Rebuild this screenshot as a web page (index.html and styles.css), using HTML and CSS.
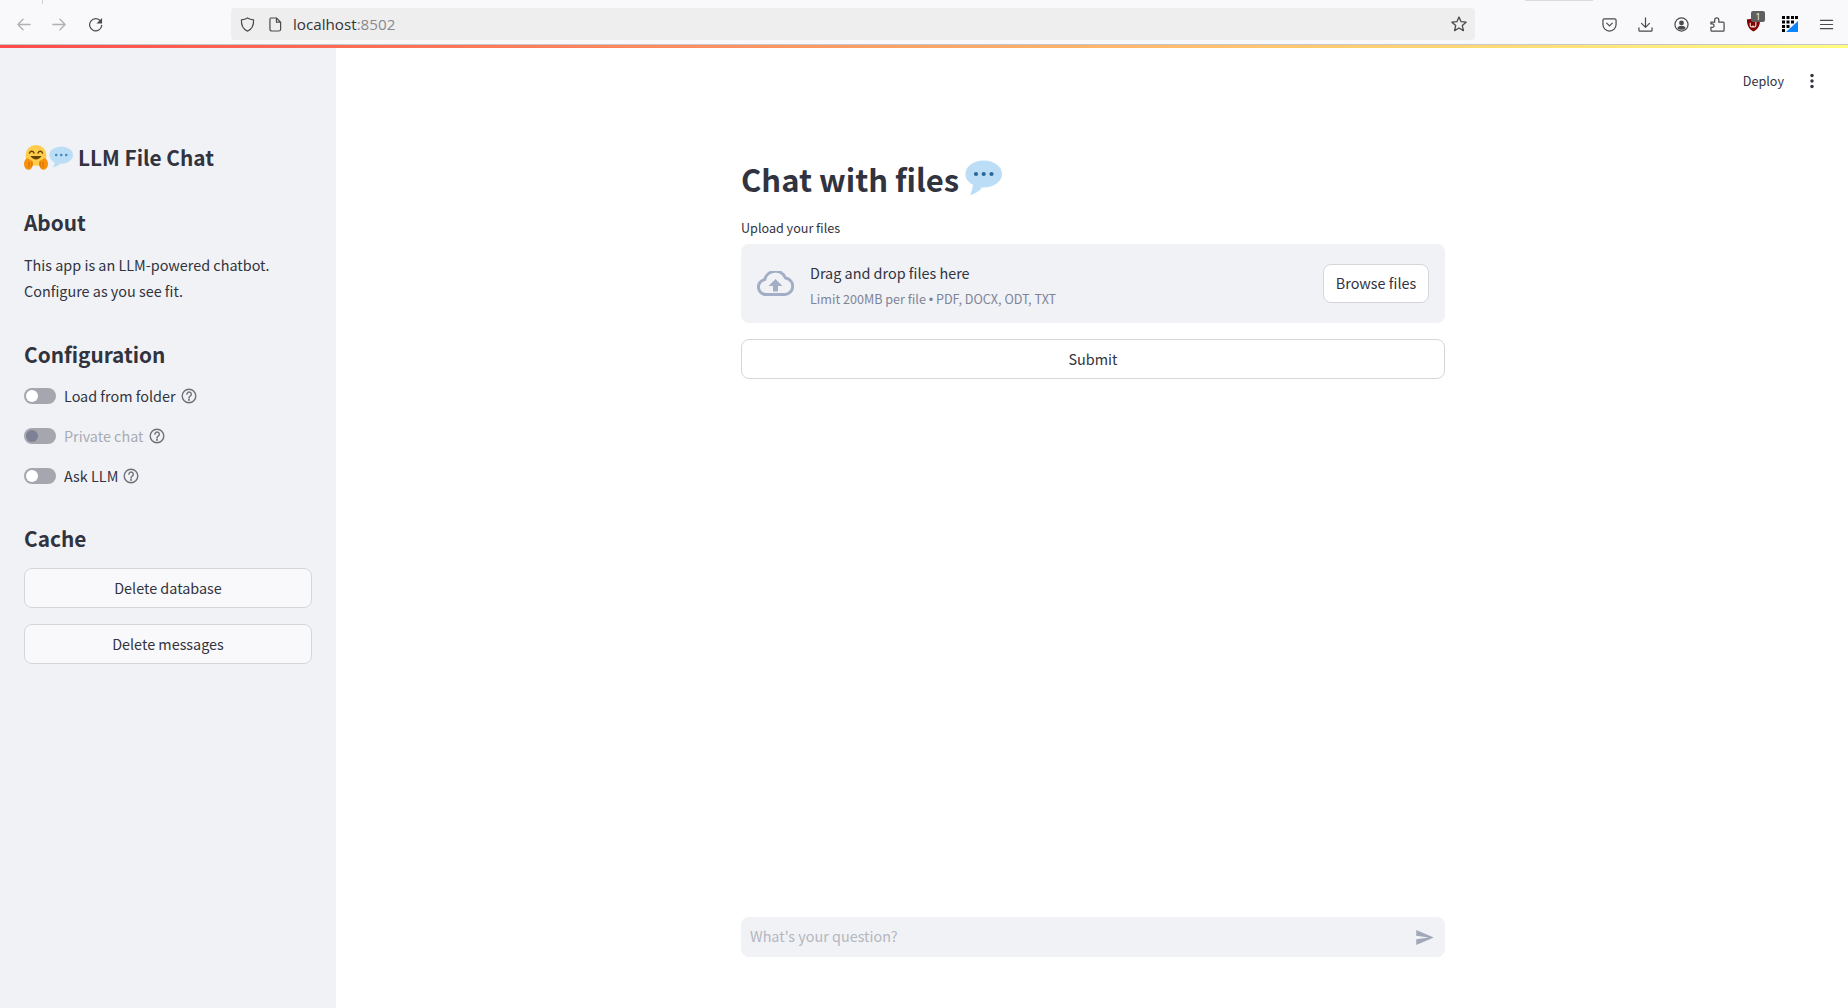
FILE: index.html
```html
<!DOCTYPE html>
<html lang="en">
<head>
<meta charset="utf-8">
<title>LLM File Chat</title>
<link rel="stylesheet" href="styles.css">
</head>
<body>
<header class="browser">
  <span class="tab-tick"></span>
  <span class="tab-shadow"></span>
  <nav class="nav-buttons">
    <svg class="ico" viewBox="0 0 16 16"><path class="dim" d="M15 8H2M7.5 2.5 2 8l5.500 5.500"/></svg>
    <svg class="ico" viewBox="0 0 16 16"><path class="dim" d="M1 8h13M8.500 2.500 14 8l-5.500 5.500"/></svg>
    <svg class="ico" viewBox="0 0 16 16"><path class="line" d="M13.500 4.500A6.500 6.500 0 1 0 14.700 9"/><path class="solid" d="M15 1v6H9z"/></svg>
  </nav>
  <div class="urlbar">
    <svg class="ico-url" viewBox="0 0 16 16"><path class="line" d="M8 1c2 1.300 4 1.800 6.500 2 .3 6-1.500 10-6.500 12C3 13 1.200 9 1.500 3 4 2.800 6 2.300 8 1z"/></svg>
    <svg class="ico-doc" viewBox="0 0 14 16"><path class="line" d="M2 1h6l4.500 4.500V13a2 2 0 0 1-2 2H3a2 2 0 0 1-2-2V2.500A1.500 1.500 0 0 1 2 1zM8 1v4.500h4.500"/></svg>
    <span class="url"><span class="host">localhost</span><span class="port">:8502</span></span>
    <svg class="ico-star" viewBox="0 0 16 16"><path class="line" d="m8 1 2.100 4.700 5 .5-3.800 3.400 1.100 5L8 12l-4.400 2.600 1.100-5L.9 6.200l5-.5z"/></svg>
  </div>
  <div class="tools">
    <svg class="ico" viewBox="0 0 16 16"><path class="line" d="M2.500 2h11A1.500 1.500 0 0 1 15 3.500V8A7 7 0 0 1 1 8V3.500A1.500 1.500 0 0 1 2.500 2z"/><path class="line" d="M5 6.500 8 9.500l3-3"/></svg>
    <svg class="ico" viewBox="0 0 16 16"><path class="line" d="M8 1v10M3.800 6.800 8 11l4.200-4.200M1 11.500V14a1 1 0 0 0 1 1h12a1 1 0 0 0 1-1v-2.500"/></svg>
    <svg class="ico" viewBox="0 0 16 16"><circle class="line" cx="8" cy="8" r="7"/><circle class="solid" cx="8" cy="6.300" r="2.600"/><path class="solid" d="M3.500 12c.6-2 2.500-2.800 4.500-2.800s3.900.8 4.500 2.800A6.500 6.500 0 0 1 8 13.700 6.500 6.500 0 0 1 3.500 12z"/></svg>
    <svg class="ico" viewBox="0 0 16 16"><path class="line" d="M2 15a1 1 0 0 1-1-1v-3h1.500a1.800 1.800 0 0 0 0-3.600H1V5.500h4V3.200a2.200 2.200 0 0 1 4.400 0V5.500H14a1 1 0 0 1 1 1V14a1 1 0 0 1-1 1z"/></svg>
    <span class="ublock">
      <svg class="ico" viewBox="0 0 16 16"><path class="shield" d="M8 1c2 1 4.500 1.500 7 1.500C15 9 13 13 8 15.500 3 13 1 9 1 2.500 3.500 2.500 6 2 8 1z"/><path class="ub-mark" d="M4.500 6v3a1.500 1.500 0 0 0 3 0 1.500 1.500 0 0 0 3 0V5"/></svg>
      <span class="badge">1</span>
    </span>
    <svg class="ico-grid" viewBox="0 0 16 16"><path class="grid-blue" d="M16 5v11H4z"/><path class="grid-black" d="M0 0h3v3H0zM4.500 0h3v3h-3zM9 0h3v3H9zM13 0h3v3h-3zM0 4.500h3v3H0zM4.500 4.500h3v3h-3zM9 4.500h3v3H9zM0 9h3v3H0zM4.500 9h3v3h-3zM0 13h3v3H0z"/></svg>
    <svg class="ico" viewBox="0 0 16 16"><path class="line" d="M1.500 3.500h13M1.500 8h13M1.500 12.500h13"/></svg>
  </div>
</header>
<div class="decoration"></div>
<div class="app">
  <aside class="sidebar">
    <h1 class="brand">
      <svg class="emoji" viewBox="0 0 24 25">
        <circle cx="12" cy="10.500" r="10.500" fill="#ffcc4d"/>
        <path d="M5.500 8c1-2.200 3.500-2.200 4.500 0M14 8c1-2.200 3.500-2.200 4.500 0" fill="none" stroke="#664500" stroke-width="1.500" stroke-linecap="round"/>
        <path d="M6.500 11c2.500 4.500 8.500 4.500 11 0z" fill="#664500"/>
        <path d="M0 19c0-2.500 1-4.500 3-6l5.500 3c1.500 3.500-.5 8.500-3.500 8.800C2 25 0 22 0 19zM24 19c0-2.500-1-4.500-3-6l-5.500 3c-1.500 3.500.5 8.500 3.500 8.800 3 .2 5-2.800 5-5.800z" fill="#f7910b"/>
        <path d="M4.500 17c1 1.500 1 3.500 0 5.500M7.500 17c.7 1.500.7 3 0 4.500M19.500 17c-1 1.500-1 3.500 0 5.500M16.500 17c-.7 1.500-.7 3 0 4.500" fill="none" stroke="#c86a00" stroke-width=".9"/>
      </svg>
      <svg class="emoji" viewBox="0 0 25 24">
        <ellipse cx="12.700" cy="9.500" rx="12.300" ry="9" fill="#bbddf5"/>
        <path d="M6 16c0 2-1 5-2 6.500 3-.5 6-2.500 8-4.500z" fill="#bbddf5"/>
        <g fill="#3b88c3"><circle cx="7.500" cy="9.500" r="1.300"/><circle cx="12.700" cy="9.500" r="1.300"/><circle cx="18" cy="9.500" r="1.300"/></g>
      </svg>
      <span class="brand-text">LLM File Chat</span>
    </h1>
    <h2 class="side-h about-h">About</h2>
    <p class="side-p">This app is an LLM-powered chatbot.</p>
    <p class="side-p">Configure as you see fit.</p>
    <h2 class="side-h config-h">Configuration</h2>
    <ul class="toggles">
      <li class="toggle"><span class="track"><span class="knob"></span></span><span class="t-label">Load from folder</span>
        <svg class="help" viewBox="0 0 16 16"><circle cx="8" cy="8" r="6.800"/><path d="M5.900 6.200a2.200 2.200 0 1 1 3.300 2c-.8.500-1.200.9-1.200 1.800"/><path d="M8 11.300v1.200"/></svg></li>
      <li class="toggle off"><span class="track"><span class="knob"></span></span><span class="t-label">Private chat</span>
        <svg class="help" viewBox="0 0 16 16"><circle cx="8" cy="8" r="6.800"/><path d="M5.900 6.200a2.200 2.200 0 1 1 3.300 2c-.8.500-1.200.9-1.200 1.800"/><path d="M8 11.300v1.200"/></svg></li>
      <li class="toggle"><span class="track"><span class="knob"></span></span><span class="t-label">Ask LLM</span>
        <svg class="help" viewBox="0 0 16 16"><circle cx="8" cy="8" r="6.800"/><path d="M5.900 6.200a2.200 2.200 0 1 1 3.300 2c-.8.500-1.200.9-1.200 1.800"/><path d="M8 11.300v1.200"/></svg></li>
    </ul>
    <h2 class="side-h cache-h">Cache</h2>
    <button class="btn side-btn">Delete database</button>
    <button class="btn side-btn">Delete messages</button>
  </aside>
  <main class="main">
    <div class="topbar">
      <span class="deploy">Deploy</span>
      <svg class="kebab" viewBox="0 0 4 16"><circle cx="2" cy="2.500" r="1.700"/><circle cx="2" cy="8" r="1.700"/><circle cx="2" cy="13.500" r="1.700"/></svg>
    </div>
    <section class="block">
      <h1 class="title">Chat with files
        <svg class="title-emoji" viewBox="0 0 37 36">
          <ellipse cx="18.700" cy="14" rx="18.300" ry="13.500" fill="#bbddf5"/>
          <path d="M8 24c0 3-1.500 8-3 11 5-1 9-4 12-7z" fill="#bbddf5"/>
          <g fill="#2a6797"><circle cx="11" cy="14" r="2.100"/><circle cx="18.700" cy="14" r="2.100"/><circle cx="26.500" cy="14" r="2.100"/></g>
        </svg>
      </h1>
      <label class="up-label">Upload your files</label>
      <div class="dropzone">
        <svg class="cloud" viewBox="0 0 37 25"><path d="M9 23.500a7.500 7.500 0 0 1-1.300-14.900A11 11 0 0 1 28.500 7a8.300 8.300 0 0 1-.5 16.500z" fill="none" stroke="#a3adc6" stroke-width="3" stroke-linejoin="round"/><path d="m18.500 8 7 7h-4.500v5.500h-5V15h-4.500z" fill="#a3adc6"/></svg>
        <div class="drop-text">
          <div class="drop-main">Drag and drop files here</div>
          <div class="drop-sub">Limit 200MB per file <span class="dot">•</span> PDF, DOCX, ODT, TXT</div>
        </div>
        <button class="btn browse">Browse files</button>
      </div>
      <button class="btn submit">Submit</button>
    </section>
    <div class="chatbar">
      <span class="placeholder">What's your question?</span>
      <svg class="send" viewBox="2 3 21 18"><path d="M2.010 21 23 12 2.010 3 2 10l15 2-15 2z"/></svg>
    </div>
  </main>
</div>
</body>
</html>
```
FILE: styles.css
```css
* { box-sizing: border-box; }
html, body { margin: 0; height: 100%; overflow: hidden; }
body {
  display: flex;
  flex-direction: column;
  background: #fff;
  color: #31333f;
  font-family: "Noto Sans CJK SC", "Noto Sans", sans-serif;
  font-size: 14.4px;
}
svg { display: block; flex: none; }
.line, .dim { fill: none; stroke: #4a4a4f; stroke-width: 1.300; stroke-linejoin: round; stroke-linecap: round; }
.dim { stroke: #b1b1b3; stroke-width: 1.500; }
.solid { fill: #4a4a4f; }

/* browser chrome */
.browser {
  position: relative;
  height: 45px;
  flex: none;
  display: flex;
  align-items: center;
  padding-top: 4px;
  background: #f9f9fb;
  border-bottom: 1px solid #c8c8cc;
}
.tab-tick { position: absolute; left: 42px; top: 0; width: 1px; height: 4px; background: #d0d0d4; }
.tab-shadow { position: absolute; left: 1525px; top: 0; width: 68px; height: 1px; background: #dcdcdf; }
.nav-buttons { display: flex; gap: 21px; margin-left: 16px; width: 215px; }
.ico { width: 15px; height: 15px; }
.urlbar {
  width: 1244px;
  height: 32px;
  display: flex;
  align-items: center;
  background: #eeeeef;
  border-radius: 4px;
  padding: 0 8px 0 9px;
}
.ico-url { width: 15px; height: 15px; }
.ico-doc { width: 13px; height: 15px; margin-left: 14px; }
.url { margin-left: 11px; font-family: "Open Sans", sans-serif; font-size: 15.2px; line-height: 20px; flex: 1; }
.host { color: #333338; }
.port { color: #8a8a8e; }
.ico-star { width: 16px; height: 16px; }
.tools { display: flex; align-items: center; gap: 21px; margin-left: 127px; }
.ublock { position: relative; display: block; }
.shield { fill: #800000; }
.ub-mark { fill: none; stroke: #f2dede; stroke-width: 1.200; }
.badge {
  position: absolute;
  left: 5px;
  top: -6px;
  width: 14px;
  height: 11px;
  border-radius: 2px;
  background: #5f5f5f;
  color: #fff;
  font: 9px/11px "Open Sans", sans-serif;
  text-align: center;
}
.ico-grid { width: 16px; height: 16px; }
.grid-blue { fill: #0a84ff; }
.grid-black { fill: #000; }
.decoration {
  height: 3px;
  flex: none;
  background: linear-gradient(90deg, #ff4b4b, #fffd80);
}

/* app */
.app { flex: 1; min-height: 0; display: flex; }
.sidebar {
  width: 336px;
  flex: none;
  background: #f0f2f6;
  padding: 93px 24px 0;
}
.brand {
  margin: 0;
  display: flex;
  align-items: center;
  height: 32px;
  font-size: 20.8px;
  line-height: 32px;
  font-weight: 600;
}
.emoji { width: 24px; height: 25px; }
.emoji + .emoji { margin-left: 1px; }
.brand-text { margin-left: 5px; }
.side-h { margin: 0; font-size: 20.8px; line-height: 32px; font-weight: 600; }
.about-h { margin-top: 33px; }
.side-p { margin: 0; font-size: 14.4px; line-height: 26px; }
.about-h + .side-p { margin-top: 14px; }
.config-h { margin-top: 34px; }
.toggles { list-style: none; margin: 14px 0 0; padding: 0; display: flex; flex-direction: column; gap: 16px; }
.toggle { display: flex; align-items: center; height: 24px; }
.track {
  width: 32px;
  height: 16px;
  border-radius: 8px;
  background: #a6a6ae;
  padding: 2px;
  flex: none;
}
.knob { display: block; width: 12px; height: 12px; border-radius: 50%; background: #fff; }
.t-label { margin-left: 8px; font-size: 14.4px; line-height: 24px; }
.help { width: 16px; height: 16px; margin-left: 5px; fill: none; stroke: #6f717b; stroke-width: 1.400; stroke-linecap: round; }
.off .knob { background: #7e8095; }
.off .t-label { color: #a9abb4; }
.cache-h { margin-top: 34px; }

.btn {
  display: block;
  font-family: inherit;
  color: #31333f;
  background: #fff;
  border: 1px solid #d5d6da;
  border-radius: 8px;
  font-size: 14.4px;
  line-height: 24px;
  padding: 0;
  height: 40px;
}
.side-btn { width: 100%; margin-top: 16px; background: #f9f9fb; }
.cache-h + .side-btn { margin-top: 14px; }

/* main */
.main { flex: 1; min-width: 0; display: flex; flex-direction: column; align-items: center; position: relative; }
.topbar {
  align-self: stretch;
  height: 66px;
  flex: none;
  display: flex;
  justify-content: flex-end;
  align-items: center;
  padding: 0 34px 0 0;
}
.deploy { font-size: 12.6px; line-height: 20px; margin-right: 1px; }
.kebab { width: 4px; height: 16px; margin-left: 25px; fill: #31333f; }
.block { width: 704px; margin-left: 2px; padding-top: 39px; }
.title { margin: 0; display: flex; align-items: center; height: 52px; font-size: 31px; line-height: 52px; font-weight: 600; }
.title-emoji { width: 37px; height: 36px; margin: -3px 0 0 6px; }
.up-label { display: block; margin-top: 13px; font-size: 12.6px; line-height: 20px; }
.dropzone {
  margin-top: 6px;
  height: 79px;
  display: flex;
  align-items: center;
  background: #f0f2f6;
  border-radius: 8px;
  padding: 0 16px;
}
.cloud { width: 37px; height: 25px; }
.drop-text { flex: 1; margin-left: 16px; padding-top: 2px; }
.drop-main { font-size: 14.4px; line-height: 26px; }
.drop-sub { font-size: 12.6px; line-height: 20px; color: #808495; margin-top: 3px; }
.dot { font-family: "Liberation Sans", sans-serif; }
.browse { width: 106px; height: 39px; padding-bottom: 2px; }
.submit { width: 100%; margin-top: 16px; }

.chatbar {
  position: absolute;
  left: 405px;
  bottom: 51px;
  width: 704px;
  height: 40px;
  display: flex;
  align-items: center;
  justify-content: space-between;
  background: #f0f2f6;
  border-radius: 8px;
  padding: 0 11px 0 9px;
}
.placeholder { font-size: 14.4px; line-height: 24px; color: #b4b6c0; margin-bottom: 2px; }
.send { width: 18px; height: 15px; fill: #a3a8b8; }
```
